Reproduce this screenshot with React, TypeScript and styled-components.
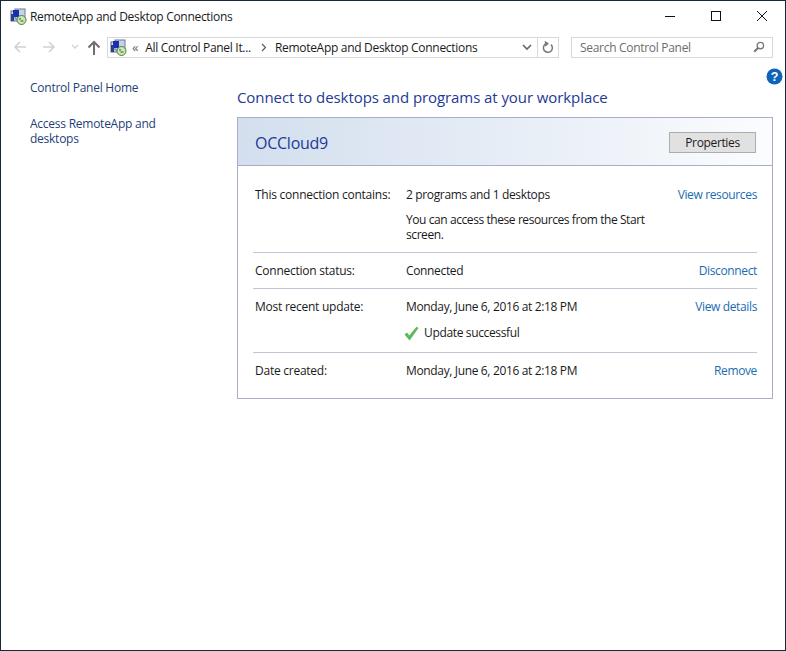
import { FC } from 'react';
import styled, { createGlobalStyle } from 'styled-components';

const Colors = {
    heading: '#1d3a94',
    link: '#1a6cb0',
    text: '#1a1a1a',
    divider: '#c4c4d4',
    cardBorder: '#a9adcb',
    field: '#d9d9d9',
};

const GlobalStyle = createGlobalStyle`
    html, body {
        margin: 0;
        padding: 0;
        background: white;
    }
    body {
        font-family: "Open Sans", "Noto Sans", "Liberation Sans", sans-serif;
        font-size: 12px;
        color: ${Colors.text};
    }
`;

const Window = styled.div`
    box-sizing: border-box;
    width: 786px;
    height: 651px;
    border: 1px solid #16283a;
    background: white;
    display: flex;
    flex-direction: column;
`;
const TitleBar = styled.div`
    height: 30px;
    display: flex;
    align-items: center;
    padding-left: 9px;
`;
const TitleText = styled.div`
    margin-left: 3px;
    flex: 1;
    letter-spacing: -0.3px;
`;
const WinButton = styled.div`
    width: 46px;
    height: 30px;
    display: flex;
    align-items: center;
    justify-content: center;
`;
const NavBar = styled.div`
    height: 26px;
    margin-top: 3px;
    display: flex;
    align-items: center;
    padding-left: 11px;
`;
const NavIcon = styled.div<{ $w: number }>`
    width: ${(p) => p.$w}px;
    height: 20px;
    display: flex;
    align-items: center;
    justify-content: center;
`;
const FlippedArrow = styled.svg`
    transform: scaleX(-1);
`;
const AddressBox = styled.div`
    box-sizing: border-box;
    width: 452px;
    height: 21px;
    border: 1px solid ${Colors.field};
    display: flex;
    align-items: center;
    padding-left: 2px;
    letter-spacing: -0.3px;
`;
const Crumb = styled.span<{ $ml: number }>`
    margin-left: ${(p) => p.$ml}px;
    white-space: nowrap;
`;
const Chevrons = styled.span`
    margin-left: 5px;
    color: #666;
    font-size: 13px;
`;
const CrumbArrow = styled.svg`
    margin-left: 10px;
`;
const AddressEnd = styled.div`
    margin-left: auto;
    display: flex;
    align-items: center;
    height: 100%;
`;
const RefreshCell = styled.div`
    width: 20px;
    height: 100%;
    border-left: 1px solid ${Colors.field};
    display: flex;
    align-items: center;
    justify-content: center;
`;
const SearchBox = styled.div`
    box-sizing: border-box;
    width: 202px;
    height: 21px;
    margin-left: 12px;
    border: 1px solid ${Colors.field};
    display: flex;
    align-items: center;
    justify-content: space-between;
    padding: 0 7px 0 8px;
    color: #6d6d6d;
    letter-spacing: -0.3px;
`;
const Body = styled.div`
    flex: 1;
    display: flex;
`;
const Sidebar = styled.nav`
    width: 236px;
    flex-shrink: 0;
    padding: 20px 60px 0 29px;
    box-sizing: border-box;
    display: flex;
    flex-direction: column;
    gap: 21px;
`;
const SideLink = styled.a`
    color: #1f3f78;
    line-height: 15px;
    letter-spacing: -0.25px;
`;
const Main = styled.main`
    flex: 1;
    display: flex;
    flex-direction: column;
`;
const HelpRow = styled.div`
    height: 17px;
    margin-top: 8px;
    padding-right: 2px;
    display: flex;
    justify-content: flex-end;
`;
const Heading = styled.h1`
    margin: 1px 0 0 0;
    height: 22px;
    font-size: 15px;
    line-height: 22px;
    font-weight: 400;
    color: ${Colors.heading};
    letter-spacing: -0.08px;
`;
const Card = styled.section`
    box-sizing: border-box;
    width: 536px;
    height: 282px;
    margin-top: 9px;
    border: 1px solid ${Colors.cardBorder};
`;
const CardHeader = styled.header`
    box-sizing: border-box;
    height: 48px;
    border-bottom: 1px solid ${Colors.cardBorder};
    background: linear-gradient(to right, #d3dfee, #e6edf6 50%, #fbfcfe);
    display: flex;
    align-items: center;
    justify-content: space-between;
    padding: 2px 16px 0 17px;
`;
const CardTitle = styled.div`
    font-size: 16px;
    color: ${Colors.heading};
    letter-spacing: -0.25px;
`;
const PropertiesButton = styled.button`
    box-sizing: border-box;
    width: 87px;
    height: 21px;
    padding: 0;
    background: #e1e1e1;
    border: 1px solid #adadad;
    font: inherit;
    letter-spacing: -0.35px;
    color: ${Colors.text};
`;
const Rows = styled.div`
    padding: 0 15px;
`;
const Row = styled.div<{ $h: number; $pt?: number; $last?: boolean }>`
    box-sizing: border-box;
    height: ${(p) => p.$h}px;
    padding: ${(p) => p.$pt ?? 10}px 0 0 2px;
    display: grid;
    grid-template-columns: 151px 1fr auto;
    align-content: start;
    line-height: 16px;
    letter-spacing: -0.25px;
    border-bottom: ${(p) => (p.$last ? 'none' : `1px solid ${Colors.divider}`)};
`;
const Value = styled.div`
    display: flex;
    flex-direction: column;
    letter-spacing: -0.35px;
`;
const Note = styled.div`
    margin-top: 9px;
    width: 250px;
    line-height: 15px;
    letter-spacing: -0.42px;
`;
const Success = styled.div`
    margin: 10px 0 0 -2px;
    display: flex;
    align-items: center;
    gap: 5px;
`;
const RowLink = styled.a`
    color: ${Colors.link};
    letter-spacing: -0.36px;
`;

const PanelIcon: FC = () => (
    <svg width="17" height="17" viewBox="0 0 17 17">
        <rect x="1" y="3" width="11" height="10" fill="#dfe5ee" stroke="#5a6b86" />
        <rect x="5" y="1" width="10" height="10" fill="#c6d3e4" stroke="#6a7a92" />
        <rect x="3" y="2" width="6" height="7" fill="#1a2fb0" />
        <rect x="1" y="6" width="3" height="7" fill="#27408f" />
        <circle cx="11.5" cy="12" r="4.5" fill="#cfe3bd" stroke="#4f7f3c" />
        <path d="M9 11h2M10.5 13h3" stroke="#2c6a22" strokeWidth="1" />
    </svg>
);

const App: FC = () => {
    return (
        <>
            <GlobalStyle />
            <Window>
                <TitleBar>
                    <PanelIcon />
                    <TitleText>RemoteApp and Desktop Connections</TitleText>
                    <WinButton>
                        <svg width="12" height="12" viewBox="0 0 12 12">
                            <path d="M1 6.5h10" stroke="#111" strokeWidth="1" />
                        </svg>
                    </WinButton>
                    <WinButton>
                        <svg width="12" height="12" viewBox="0 0 12 12">
                            <rect x="1.5" y="1.5" width="9" height="9" fill="none" stroke="#111" />
                        </svg>
                    </WinButton>
                    <WinButton>
                        <svg width="12" height="12" viewBox="0 0 12 12">
                            <path d="M1 1l10 10M11 1 1 11" stroke="#111" strokeWidth="1" />
                        </svg>
                    </WinButton>
                </TitleBar>
                <NavBar>
                    <NavIcon $w={16}>
                        <svg width="14" height="14" viewBox="0 0 14 14">
                            <path d="M13 7H2M7 2 2 7l5 5" fill="none" stroke="#d2d2d2" strokeWidth="1.6" />
                        </svg>
                    </NavIcon>
                    <NavIcon $w={42}>
                        <FlippedArrow width="14" height="14" viewBox="0 0 14 14">
                            <path d="M13 7H2M7 2 2 7l5 5" fill="none" stroke="#d2d2d2" strokeWidth="1.6" />
                        </FlippedArrow>
                    </NavIcon>
                    <NavIcon $w={10}>
                        <svg width="8" height="6" viewBox="0 0 8 6">
                            <path d="M1 1l3 3 3-3" fill="none" stroke="#d2d2d2" strokeWidth="1.3" />
                        </svg>
                    </NavIcon>
                    <NavIcon $w={27}>
                        <svg width="14" height="15" viewBox="0 0 14 15">
                            <path d="M7 15V2M1.5 7.5 7 2l5.5 5.5" fill="none" stroke="#6f6f6f" strokeWidth="2" />
                        </svg>
                    </NavIcon>
                    <AddressBox>
                        <PanelIcon />
                        <Chevrons>«</Chevrons>
                        <Crumb $ml={7}>All Control Panel It...</Crumb>
                        <CrumbArrow width="6" height="9" viewBox="0 0 6 9">
                            <path d="M1 1l3.5 3.5L1 8" fill="none" stroke="#555" strokeWidth="1.1" />
                        </CrumbArrow>
                        <Crumb $ml={8}>RemoteApp and Desktop Connections</Crumb>
                        <AddressEnd>
                            <NavIcon $w={20}>
                                <svg width="10" height="7" viewBox="0 0 10 7">
                                    <path d="M1 1l4 4 4-4" fill="none" stroke="#666" strokeWidth="1.6" />
                                </svg>
                            </NavIcon>
                            <RefreshCell>
                                <svg width="12" height="14" viewBox="0 0 12 14">
                                    <path d="M9 4.6A4.5 4.5 0 1 1 3.6 4" fill="none" stroke="#777" strokeWidth="1.5" />
                                    <path d="M2.6 .8 7 3.6 3.4 6.8z" fill="#777" />
                                </svg>
                            </RefreshCell>
                        </AddressEnd>
                    </AddressBox>
                    <SearchBox>
                        <span>Search Control Panel</span>
                        <svg width="12" height="12" viewBox="0 0 12 12">
                            <circle cx="7.4" cy="4.6" r="3.2" fill="none" stroke="#777" strokeWidth="1.4" />
                            <path d="M5 7 1.2 10.8" stroke="#777" strokeWidth="2" />
                        </svg>
                    </SearchBox>
                </NavBar>
                <Body>
                    <Sidebar>
                        <SideLink>Control Panel Home</SideLink>
                        <SideLink>Access RemoteApp and desktops</SideLink>
                    </Sidebar>
                    <Main>
                        <HelpRow>
                            <svg width="17" height="17" viewBox="0 0 17 17">
                                <circle cx="8.5" cy="8.5" r="8" fill="#0f64b8" />
                                <text x="8.5" y="13" textAnchor="middle" fontSize="12.5" fontWeight="700" fill="white" fontFamily="Liberation Sans, sans-serif">?</text>
                            </svg>
                        </HelpRow>
                        <Heading>Connect to desktops and programs at your workplace</Heading>
                        <Card>
                            <CardHeader>
                                <CardTitle>OCCloud9</CardTitle>
                                <PropertiesButton>Properties</PropertiesButton>
                            </CardHeader>
                            <Rows>
                                <Row $h={87} $pt={21}>
                                    <div>This connection contains:</div>
                                    <Value>
                                        <div>2 programs and 1 desktops</div>
                                        <Note>You can access these resources from the Start screen.</Note>
                                    </Value>
                                    <RowLink>View resources</RowLink>
                                </Row>
                                <Row $h={36}>
                                    <div>Connection status:</div>
                                    <Value>Connected</Value>
                                    <RowLink>Disconnect</RowLink>
                                </Row>
                                <Row $h={64}>
                                    <div>Most recent update:</div>
                                    <Value>
                                        <div>Monday, June 6, 2016 at 2:18 PM</div>
                                        <Success>
                                            <svg width="15" height="15" viewBox="0 0 15 15">
                                                <path d="M.5 8.5 3 6.5l2.3 3L12.5.8 14.5 2 5.6 14.5z" fill="#5cb85a" />
                                            </svg>
                                            Update successful
                                        </Success>
                                    </Value>
                                    <RowLink>View details</RowLink>
                                </Row>
                                <Row $h={40} $last>
                                    <div>Date created:</div>
                                    <Value>Monday, June 6, 2016 at 2:18 PM</Value>
                                    <RowLink>Remove</RowLink>
                                </Row>
                            </Rows>
                        </Card>
                    </Main>
                </Body>
            </Window>
        </>
    );
};

export default App;
